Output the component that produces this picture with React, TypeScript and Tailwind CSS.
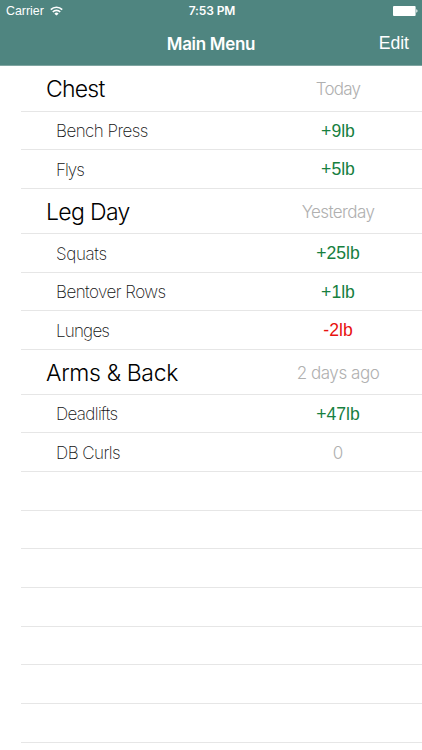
import React from 'react';

interface Row {
    label: string;
    value: string;
    height: string;
    labelStyle: string;
    valueStyle: string;
}

const HEADING = 'pl-[25px] text-[23px] font-light text-black';
const ITEM = 'pl-[35px] text-[17px] font-extralight text-[#111111]';
const DATE = 'text-[17px] font-light text-[#b0b0b0]';
const GAIN = "font-['Liberation_Sans',sans-serif] text-[17.6px] text-[#17803f]";
const LOSS = "font-['Liberation_Sans',sans-serif] text-[17.6px] text-[#e8120f]";

const rows: Row[] = [
    { label: 'Chest', value: 'Today', height: 'h-[46px]', labelStyle: `${HEADING} tracking-[-0.75px]`, valueStyle: `${DATE} tracking-[-0.8px]` },
    { label: 'Bench Press', value: '+9lb', height: 'h-[38px]', labelStyle: `${ITEM} tracking-[-0.55px]`, valueStyle: GAIN },
    { label: 'Flys', value: '+5lb', height: 'h-[39px]', labelStyle: `${ITEM} tracking-[-1px]`, valueStyle: GAIN },
    { label: 'Leg Day', value: 'Yesterday', height: 'h-[45px]', labelStyle: `${HEADING} tracking-[-0.65px]`, valueStyle: `${DATE} tracking-[-0.6px]` },
    { label: 'Squats', value: '+25lb', height: 'h-[39px]', labelStyle: `${ITEM} tracking-[-0.35px]`, valueStyle: GAIN },
    { label: 'Bentover Rows', value: '+1lb', height: 'h-[38px]', labelStyle: `${ITEM} tracking-[-0.55px]`, valueStyle: GAIN },
    { label: 'Lunges', value: '-2lb', height: 'h-[39px]', labelStyle: `${ITEM} tracking-[-0.8px]`, valueStyle: LOSS },
    { label: 'Arms & Back', value: '2 days ago', height: 'h-[45px]', labelStyle: `${HEADING} tracking-[-0.35px]`, valueStyle: `${DATE} tracking-[-0.45px]` },
    { label: 'Deadlifts', value: '+47lb', height: 'h-[38px]', labelStyle: `${ITEM} tracking-[-0.65px]`, valueStyle: GAIN },
    { label: 'DB Curls', value: '0', height: 'h-[39px]', labelStyle: `${ITEM} tracking-[-0.55px]`, valueStyle: DATE },
];

// Empty rows that fill the rest of the table
const emptyRows = ['h-[39px]', 'h-[38px]', 'h-[39px]', 'h-[39px]', 'h-[38px]', 'h-[39px]', 'h-[39px]'];

function WifiIcon() {
    return (
        <svg width="13" height="10" viewBox="0 0 13 10" fill="none" stroke="white" strokeWidth="1.7">
            <path d="M0.8 3.6a8.1 8.1 0 0 1 11.4 0" />
            <path d="M2.8 6a5.2 5.2 0 0 1 7.4 0" />
            <path d="M6.5 9.6L4.4 7.7a2.8 2.8 0 0 1 4.2 0z" fill="white" stroke="none" />
        </svg>
    );
}

function BatteryIcon() {
    return (
        <svg width="25" height="10" viewBox="0 0 25 10" fill="white">
            <rect x="0" y="0" width="22.6" height="10" rx="1" />
            <path d="M23.3 3.3c1.6.3 1.6 3.1 0 3.4z" />
        </svg>
    );
}

export default function App() {
    return (
        <div className="w-[422px] h-[750px] overflow-hidden bg-white font-['Inter',sans-serif]">
            <header className="h-[66px] bg-[#4f8580] text-white border-b border-[#7fa5a1]">
                <div className="grid grid-cols-3 items-center h-[22px] pl-[6px] pr-[4px]">
                    <div className="flex items-center gap-[6px]">
                        <span className="font-['Liberation_Sans',sans-serif] text-[12.4px] leading-none">Carrier</span>
                        <WifiIcon />
                    </div>
                    <span className="text-center text-[12px] leading-none font-semibold tracking-[-0.1px]">7:53 PM</span>
                    <div className="flex justify-end">
                        <BatteryIcon />
                    </div>
                </div>
                <div className="grid grid-cols-3 items-center h-[43px] pt-px pr-[13px] pl-[13px]">
                    <span />
                    <h1 className="text-center text-[17px] font-semibold leading-none tracking-[-0.3px] whitespace-nowrap">Main Menu</h1>
                    <button className="text-right font-['Liberation_Sans',sans-serif] text-[17.6px] font-normal leading-none">Edit</button>
                </div>
            </header>

            <main className="pl-[21px]">
                {rows.map((row) => (
                    <div key={row.label} className={`flex items-center pt-[2px] border-b border-[#e6e6e6] ${row.height}`}>
                        <span className={`flex-1 whitespace-nowrap leading-none ${row.labelStyle}`}>{row.label}</span>
                        <span className={`w-[168px] text-center whitespace-nowrap leading-none ${row.valueStyle}`}>{row.value}</span>
                    </div>
                ))}
                {emptyRows.map((height, i) => (
                    <div key={i} className={`border-b border-[#e6e6e6] ${height}`} />
                ))}
            </main>
        </div>
    );
}
